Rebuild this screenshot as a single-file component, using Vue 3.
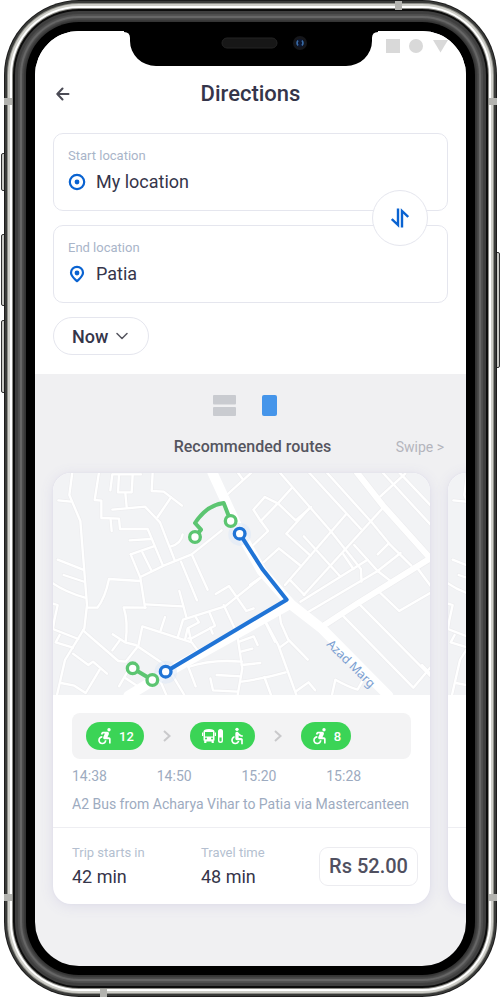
<script setup>
import { ref } from 'vue'

const start = ref('My location')
const end = ref('Patia')
const when = ref('Now')
const active = ref(0)

function swap() {
  const previous = start.value
  start.value = end.value
  end.value = previous
}

// Only the card in view shows its details; the neighbours peek in as blanks.
function onScroll(event) {
  const track = event.target
  active.value = Math.round(track.scrollLeft / track.firstElementChild.offsetWidth)
}

const trip = {
  legs: [
    { kind: 'wheel', minutes: '12' },
    { kind: 'bus', minutes: '' },
    { kind: 'wheel', minutes: '8' },
  ],
  times: ['14:38', '14:50', '15:20', '15:28'],
  summary: 'A2 Bus from Acharya Vihar to Patia via Mastercanteen',
  startsIn: '42 min',
  duration: '48 min',
  price: 'Rs 52.00',
}
const routes = [
  { id: 1, ...trip },
  { id: 2, ...trip },
]

const westRoads = [
  'M82 22L73 90L106 168L126 420L118 490L60 585L36 690',
  'M40 106L78 110', 'M38 284L114 314', 'M56 330L120 351', 'M24 355Q60 380 120 398',
  'M162 22L149 105L169 107L169 159L222 161L225 192L308 192L354 302',
  'M197 165L200 198', 'M196 76L202 28L288 28', 'M222 30L219 82L260 82L263 30', 'M241 84L245 126',
  'M323 22L320 78L356 80L411 122', 'M202 134L300 125L345 172L390 288', 'M378 97L338 156',
  'M378 244Q408 236 413 208', 'M254 226L318 222', 'M257 268L326 244', 'M257 268L286 338L300 428',
  'M292 262L320 318', 'M286 336L356 302L440 268L530 196', 'M408 290L456 406', 'M442 272L488 374',
  'M286 348L192 342Q180 400 157 428L126 428', 'M302 418L412 424', 'M403 378L424 456',
  'M302 428L236 427Q250 470 242 530', 'M203 508L240 532L272 540L355 596', 'M202 556L224 526',
  'M114 496L220 588L242 590L280 542L292 484L440 532L458 556', 'M360 456L347 496',
  'M398 518L414 464L540 424L650 336', 'M452 456L462 472L428 490L420 524',
  'M494 444L510 482L440 520L430 520', 'M496 488L503 506', 'M430 490L438 526',
  'M536 420L576 505L592 610L578 690', 'M512 387L552 363L604 438L626 430',
  'M583 530L626 514L638 540', 'M588 560L622 551', 'M590 600L646 594', 'M515 630L588 634',
  'M430 606Q500 582 590 590', 'M590 650Q660 640 722 622', 'M430 606L452 664',
  'M496 640L504 676L578 680', 'M84 566L130 600L144 590L186 626', 'M164 614L122 684L88 662L48 654',
  'M24 416L38 420L28 466L24 492L100 522', 'M44 510L32 532L84 548', 'M222 664L244 626L268 592',
  'M242 640L278 664', 'M342 640L364 690', 'M382 630L418 690', 'M656 462L690 530', 'M658 636L678 690',
  'M545 90L620 22', 'M578 22L594 44',
]

const eastRoads = [
  'M88 22L240 198L330 312L332 350', 'M44 96L10 134L32 168L82 116', 'M44 96L84 116L136 166L182 126',
  'M32 168L54 198L10 240', 'M125 68L82 116', 'M175 22L330 192', 'M310 240L380 318', 'M180 126L108 206L180 272',
  'M228 22L362 172L416 238L480 302', 'M394 22L540 182', 'M444 22L540 124', 'M388 94L462 26',
  'M160 214L268 334', 'M286 148L104 360', 'M396 128L160 390', 'M380 318L416 346', 'M278 268L308 312',
  'M40 292L86 250L148 300', 'M118 344L162 390', 'M150 410L350 284', 'M172 442L380 318L448 264',
  'M380 268L412 236', 'M388 384L444 438L540 382', 'M500 312L540 366', 'M326 418L540 636',
  'M276 452L486 668L540 604', 'M512 600L540 630', 'M0 360L44 328',
  'M40 458L84 540L138 690', 'M86 430L92 474L114 524L172 584', 'M88 548L112 530',
  'M138 678L174 652L194 676', 'M244 690L254 644Q290 664 320 674L336 646',
]
</script>

<template>
  <div class="page">
    <div class="device">
      <span class="key mute"></span>
      <span class="key up"></span>
      <span class="key down"></span>
      <span class="key power"></span>
      <span class="band b1"></span>
      <span class="band b2"></span>
      <span class="band b3"></span>
      <span class="band b4"></span>
      <span class="band b5"></span>
      <span class="band b6"></span>

      <main class="screen">
        <div class="notch">
          <svg width="254" height="36" viewBox="0 0 254 36" aria-hidden="true">
            <path d="M0 0V1Q6 1 6 7V10A26 25 0 0 0 32 35H222A26 25 0 0 0 248 10V7Q248 1 254 1V0Z" fill="#000" />
            <rect x="98" y="7" width="55" height="10" rx="5" fill="#171717" stroke="#242424" />
            <circle cx="176" cy="12" r="7" fill="#15161a" />
            <circle cx="176" cy="12" r="4" fill="#0b1630" />
            <path d="M174 9.500Q172 12 174 14.500M178 9.500Q180 12 178 14.500" fill="none" stroke="#3b6ca5" stroke-width="1.500" />
          </svg>
        </div>

        <section class="planner">
          <div class="status">
            <svg width="62" height="14" viewBox="0 0 62 14" fill="#d9d9d9" aria-hidden="true">
              <rect width="14" height="14" /><circle cx="30" cy="7" r="7" /><path d="M47 1H62L54.500 13.500Z" />
            </svg>
          </div>
          <header class="bar">
            <button class="back" type="button" aria-label="Back">
              <svg width="14" height="14" viewBox="0 0 14 14" fill="none" stroke="#4b4b55" stroke-width="2" stroke-linecap="round" stroke-linejoin="round">
                <path d="M12.500 7H1.500M6.500 1.500L1.300 7L6.500 12.500" />
              </svg>
            </button>
            <h1>Directions</h1>
          </header>

          <div class="fields">
            <div class="field">
              <label for="start">Start location</label>
              <div class="value">
                <svg width="18" height="18" viewBox="0 0 18 18" aria-hidden="true">
                  <circle cx="9" cy="9" r="7.200" fill="none" stroke="#0a63d1" stroke-width="2.200" />
                  <circle cx="9" cy="9" r="2.400" fill="#0a63d1" />
                </svg>
                <input id="start" v-model="start" type="text" />
              </div>
            </div>
            <div class="field">
              <label for="end">End location</label>
              <div class="value">
                <svg width="18" height="18" viewBox="0 0 18 18" aria-hidden="true">
                  <path d="M9 1.800A6 6 0 0 0 3 7.800C3 11.200 6 13.300 9 16.200C12 13.300 15 11.200 15 7.800A6 6 0 0 0 9 1.800Z" fill="none" stroke="#0a63d1" stroke-width="2.200" stroke-linejoin="round" />
                  <circle cx="9" cy="8" r="2.400" fill="#0a63d1" />
                </svg>
                <input id="end" v-model="end" type="text" />
              </div>
            </div>
            <button class="swap" type="button" aria-label="Swap locations" @click="swap">
              <svg width="18" height="20" viewBox="0 0 18 20" fill="none" stroke="#0a63d1" stroke-width="2.400">
                <path d="M7 .5V17L.8 11" /><path d="M11 19.500V3L17.200 9" />
              </svg>
            </button>
          </div>

          <div class="when">
            <select v-model="when" aria-label="Departure">
              <option>Now</option>
            </select>
            <svg width="12" height="8" viewBox="0 0 12 8" fill="none" stroke="#55555f" stroke-width="1.500" stroke-linecap="round" stroke-linejoin="round" aria-hidden="true">
              <path d="M1 1.500L6 6.500L11 1.500" />
            </svg>
          </div>
        </section>

        <section class="results">
          <div class="views">
            <button type="button" aria-label="List view">
              <svg width="23" height="21" viewBox="0 0 23 21" fill="#c9cbd0"><rect width="23" height="9.500" rx="1" /><rect y="12" width="23" height="9" rx="1" /></svg>
            </button>
            <button type="button" aria-label="Card view">
              <svg width="15" height="21" viewBox="0 0 15 21"><rect width="15" height="21" rx="2" fill="#4595ea" /></svg>
            </button>
          </div>
          <div class="heading">
            <h2>Recommended routes</h2>
            <a href="#routes">Swipe &gt;</a>
          </div>

          <div id="routes" class="carousel" @scroll="onScroll">
            <article v-for="(route, n) in routes" :key="route.id" class="card" :class="{ idle: n !== active }">
              <svg class="map" viewBox="24 24 1131 666" preserveAspectRatio="xMinYMin slice" aria-hidden="true">
                <rect x="24" y="22" width="1131" height="670" fill="#f2f3f5" />
                <g v-for="pass in ['edge', 'road']" :key="pass" :class="pass">
                  <path v-for="d in westRoads" :key="d" :d="d" />
                  <g transform="translate(615 0) scale(1.008 1)">
                    <path v-for="d in eastRoads" :key="d" :d="d" />
                    <path class="wide" d="M318 22L396 122L540 284" />
                    <path class="wide" d="M216 484L322 414L540 278" />
                  </g>
                </g>
                <g class="main">
                  <path d="M502 22L584 200L650 318L740 420L830 490L1030 692" />
                  <path d="M730 420L356 628L250 692" />
                </g>
                <text v-if="n === active" transform="translate(843 540) rotate(44.500)">Azad Marg</text>
                <circle cx="584" cy="208" r="34" fill="#dbe8f8" opacity="0.500" />
                <circle cx="362" cy="622" r="34" fill="#dbe8f8" opacity="0.500" />
                <g class="trail">
                  <path class="ride" d="M584 206L652 312L725 404L362 620" />
                  <path class="roll" d="M450 216L468 194L450 174Q486 120 536 114L557 168" />
                  <path class="roll" d="M263 610L322 645" />
                </g>
                <g class="stops">
                  <circle class="roll" cx="450" cy="216" r="16" />
                  <circle class="roll" cx="557" cy="168" r="16" />
                  <circle class="roll" cx="263" cy="610" r="16" />
                  <circle class="roll" cx="322" cy="645" r="16" />
                  <circle class="ride" cx="584" cy="206" r="16" />
                  <circle class="ride" cx="362" cy="620" r="16" />
                </g>
              </svg>

              <div class="details">
                <template v-if="n === active">
                  <div class="legs">
                    <template v-for="(leg, i) in route.legs" :key="i">
                      <svg v-if="i" width="8" height="14" viewBox="0 0 8 14" fill="none" stroke="#c9c9cb" stroke-width="2" aria-hidden="true"><path d="M1 2L6.500 7L1 12" /></svg>
                      <span class="chip" :class="leg.kind">
                        <svg v-if="leg.kind === 'wheel'" width="20" height="20" viewBox="0 0 24 24" fill="#fff" aria-hidden="true">
                          <circle cx="18" cy="4.540" r="2" />
                          <path d="M15 17h-2c0 1.650-1.350 3-3 3s-3-1.350-3-3 1.350-3 3-3v-2c-2.760 0-5 2.240-5 5s2.240 5 5 5 5-2.240 5-5zm3-3.500h-1.860l1.670-3.670C18.420 8.500 17.440 7 15.960 7h-5.200c-.81 0-1.540.47-1.870 1.200L8.220 10l1.920.53.65-1.530H13l-1.830 4.100c-.6 1.330.39 2.900 1.850 2.900H18v5h2v-5.500c0-1.100-.9-2-2-2z" />
                        </svg>
                        <template v-else>
                          <svg width="22" height="16" viewBox="0 0 22 16" aria-hidden="true">
                            <path fill="#fff" fill-rule="evenodd" d="M1.500 3.500Q1.500 1 7 1T12.500 3.500V12.500H11.800V15H9.600V13.500H4.400V15H2.200V12.500H1.500ZM3 4V8.500H11V4ZM3 10.500a1 1 0 1 0 2 0a1 1 0 1 0-2 0M9 10.500a1 1 0 1 0 2 0a1 1 0 1 0-2 0" />
                            <path d="M.6 4.500V8M13.400 4.500V8" stroke="#fff" stroke-width="1.200" />
                            <rect x="16.700" y="1.700" width="3.600" height="12.600" rx="1.800" fill="none" stroke="#fff" stroke-width="1.400" />
                            <path d="M16.500 9.500V3.500a2 2 0 0 1 4 0V9.500Z" fill="#fff" />
                          </svg>
                          <svg width="20" height="20" viewBox="0 0 24 24" fill="#fff" aria-hidden="true">
                            <circle cx="12" cy="4" r="2" />
                            <path d="M19 13v-2c-1.540.02-3.090-.75-4.070-1.830l-1.290-1.430c-.17-.19-.38-.34-.61-.45-.01 0-.01-.01-.02-.01H13c-.35-.2-.75-.3-1.190-.26C10.760 7.110 10 8.040 10 9.090V15c0 1.100.9 2 2 2h5v5h2v-5.500c0-1.100-.9-2-2-2h-3v-3.450c1.290 1.070 3.250 1.940 5 1.950zm-6.170 5c-.41 1.160-1.520 2-2.830 2-1.660 0-3-1.340-3-3 0-1.310.84-2.410 2-2.830V12.100c-2.280.46-4 2.480-4 4.900 0 2.760 2.240 5 5 5 2.420 0 4.440-1.720 4.900-4h-2.070z" />
                          </svg>
                        </template>
                        <span v-if="leg.minutes">{{ leg.minutes }}</span>
                      </span>
                    </template>
                  </div>
                  <div class="times">
                    <time v-for="t in route.times" :key="t">{{ t }}</time>
                  </div>
                  <p class="summary">{{ route.summary }}</p>
                </template>
              </div>

              <footer class="facts">
                <template v-if="n === active">
                  <dl>
                    <dt>Trip starts in</dt>
                    <dd>{{ route.startsIn }}</dd>
                  </dl>
                  <dl>
                    <dt>Travel time</dt>
                    <dd>{{ route.duration }}</dd>
                  </dl>
                  <strong>{{ route.price }}</strong>
                </template>
              </footer>
            </article>
          </div>
        </section>
      </main>
    </div>
  </div>
</template>

<style>
body {
  background: #fff;
}
</style>

<style scoped>
* {
  box-sizing: border-box;
  margin: 0;
}
button,
input,
select {
  font: inherit;
  color: inherit;
  background: none;
  border: 0;
  padding: 0;
}
svg {
  display: block;
  flex: none;
}
.page {
  padding: 0 3px 0 4px;
  font-family: Roboto, "Liberation Sans", sans-serif;
  color: #35354a;
}
.device {
  position: relative;
  display: flex;
  min-height: 100vh;
  padding: 31px;
}
.screen {
  position: relative;
  flex: 1;
  min-width: 0;
  display: flex;
  flex-direction: column;
  overflow: hidden;
  border-radius: 44px;
  background: #f0f0f2;
  box-shadow:
    0 0 0 9px #000,
    0 0 2px 11px #333,
    0 0 1px 13px #4c4c4c,
    0 0 1px 15px #6a6a6a,
    0 0 1px 17px #505050,
    0 0 0 20px #3f3f3f,
    0 0 0 22px #0c0c0c,
    0 0 0 23px #8b8b86,
    0 0 0 25px #fff,
    0 0 0 27px #cfcfc9,
    0 0 0 28px #8d8d88,
    0 0 0 30px #3a3b39,
    0 0 0 31px #1d1d1d;
}
.key {
  position: absolute;
  left: -3px;
  width: 4px;
  border: 1px solid #333;
  border-radius: 2px 0 0 2px;
  background: #c8c8c4;
}
.mute {
  top: 153px;
  height: 38px;
}
.up {
  top: 234px;
  height: 72px;
}
.down {
  top: 320px;
  height: 73px;
}
.power {
  top: 252px;
  left: auto;
  right: -3px;
  height: 116px;
  border-radius: 0 2px 2px 0;
}
.band {
  position: absolute;
  z-index: 1;
  width: 8px;
  height: 7px;
  background: #b3b3af;
}
.b1 { left: 0; top: 98px; }
.b2 { right: 0; top: 98px; }
.b3 { left: 0; bottom: 96px; }
.b4 { right: 0; bottom: 96px; }
.b5 { right: 95px; top: 1px; width: 7px; height: 9px; }
.b6 { left: 96px; bottom: 0; width: 7px; height: 8px; }

.notch {
  position: absolute;
  top: 0;
  left: 0;
  right: 0;
  display: flex;
  justify-content: center;
}
.planner {
  padding: 8px 18px 19px;
  background: #fff;
}
.status {
  display: flex;
  justify-content: flex-end;
}
.bar {
  display: grid;
  grid-template-columns: 20px 1fr 20px;
  align-items: center;
  height: 40px;
  margin: 21px 0 19px;
}
.back {
  width: 20px;
  height: 20px;
  display: grid;
  place-items: center;
}
h1 {
  font-size: 22px;
  line-height: 28px;
  font-weight: 500;
  text-align: center;
}
.fields {
  position: relative;
  display: grid;
  gap: 14px;
}
.field {
  height: 78px;
  padding: 14px;
  border: 1px solid #e5e6ee;
  border-radius: 10px;
}
.field label {
  display: block;
  font-size: 13px;
  line-height: 16px;
  color: #a9b5c9;
}
.value {
  display: flex;
  align-items: center;
  gap: 10px;
  height: 36px;
}
.value input {
  flex: 1;
  min-width: 0;
  font-size: 18px;
  line-height: 24px;
  outline: 0;
}
.swap {
  position: absolute;
  right: 20px;
  top: calc(50% - 28px);
  width: 56px;
  height: 56px;
  display: grid;
  place-items: center;
  border: 1px solid #e5e6ee;
  border-radius: 50%;
  background: #fff;
}
.when {
  width: max-content;
  margin-top: 14px;
  display: grid;
  grid-template-columns: 1fr;
  align-items: center;
  border: 1px solid #e5e6ee;
  border-radius: 19px;
}
.when select,
.when svg {
  grid-area: 1 / 1;
}
.when select {
  appearance: none;
  height: 36px;
  padding: 0 39px 0 18px;
  font-size: 18px;
  font-weight: 500;
}
.when svg {
  justify-self: end;
  margin-right: 20px;
  pointer-events: none;
}
.results {
  flex: 1;
  padding-top: 21px;
}
.views {
  display: flex;
  justify-content: center;
  gap: 26px;
  padding-right: 12px;
}
.heading {
  display: grid;
  grid-template-columns: 1fr auto 1fr;
  align-items: baseline;
  padding: 20px 22px 0 26px;
}
h2 {
  grid-column: 2;
  font-size: 16px;
  line-height: 22px;
  font-weight: 500;
  color: #55555f;
}
.heading a {
  justify-self: end;
  font-size: 14px;
  color: #b4b5bd;
  text-decoration: none;
}
.carousel {
  display: flex;
  gap: 18px;
  padding: 15px 18px 30px;
  overflow-x: auto;
  scrollbar-width: none;
}
.card {
  flex: 0 0 calc(100% - 18px);
  display: flex;
  flex-direction: column;
  overflow: hidden;
  border-radius: 18px;
  background: #fff;
  box-shadow: 0 2px 14px #dddce9, 0 0 2px #dcdbe8;
}
.map {
  width: 100%;
  height: 222px;
}
.edge,
.road,
.main,
.trail {
  fill: none;
  stroke-linejoin: round;
  stroke-linecap: round;
}
.edge {
  stroke: #ededef;
  stroke-width: 11px;
}
.road {
  stroke: #fff;
  stroke-width: 7px;
}
.edge .wide {
  stroke-width: 22px;
}
.road .wide {
  stroke-width: 18px;
}
.main {
  stroke: #fff;
  stroke-width: 30px;
}
.map text {
  font-family: "Noto Sans", sans-serif;
  font-size: 37px;
  fill: #7b9fd2;
}
.trail {
  stroke-width: 12px;
}
.stops {
  fill: #fff;
  stroke-width: 10px;
}
.ride {
  stroke: #2074d6;
}
.roll {
  stroke: #5cc571;
}
.details {
  padding: 18px 19px 14px;
  border-bottom: 1px solid #eeeef2;
}
.idle .details {
  height: 133px;
}
.legs {
  display: flex;
  align-items: center;
  gap: 19px;
  height: 46px;
  padding: 0 14px;
  border-radius: 8px;
  background: #f3f3f4;
}
.chip {
  display: flex;
  align-items: center;
  gap: 5px;
  height: 28px;
  padding: 0 10px 0 8px;
  border-radius: 14px;
  background: #3bd456;
  color: #fff;
  font-size: 13px;
  font-weight: 500;
}
.chip.bus {
  gap: 3px;
  padding: 0 8px 0 12px;
}
.times {
  display: grid;
  grid-template-columns: repeat(4, 1fr);
  margin-top: 8px;
  font-size: 14px;
  line-height: 18px;
  color: #9dabc0;
}
.summary {
  margin-top: 10px;
  font-size: 14px;
  line-height: 18px;
  white-space: nowrap;
  color: #9dabc0;
}
.facts {
  display: grid;
  grid-template-columns: 129px 1fr auto;
  align-items: center;
  padding: 17px 12px 17px 19px;
}
dt {
  font-size: 13px;
  line-height: 16px;
  color: #b4bfd0;
}
dd {
  margin-top: 6px;
  font-size: 18px;
  line-height: 20px;
}
.facts strong {
  padding: 0 9px;
  border: 1px solid #ececf0;
  border-radius: 9px;
  font-size: 20px;
  line-height: 37px;
  font-weight: 500;
  color: #505060;
}
</style>
